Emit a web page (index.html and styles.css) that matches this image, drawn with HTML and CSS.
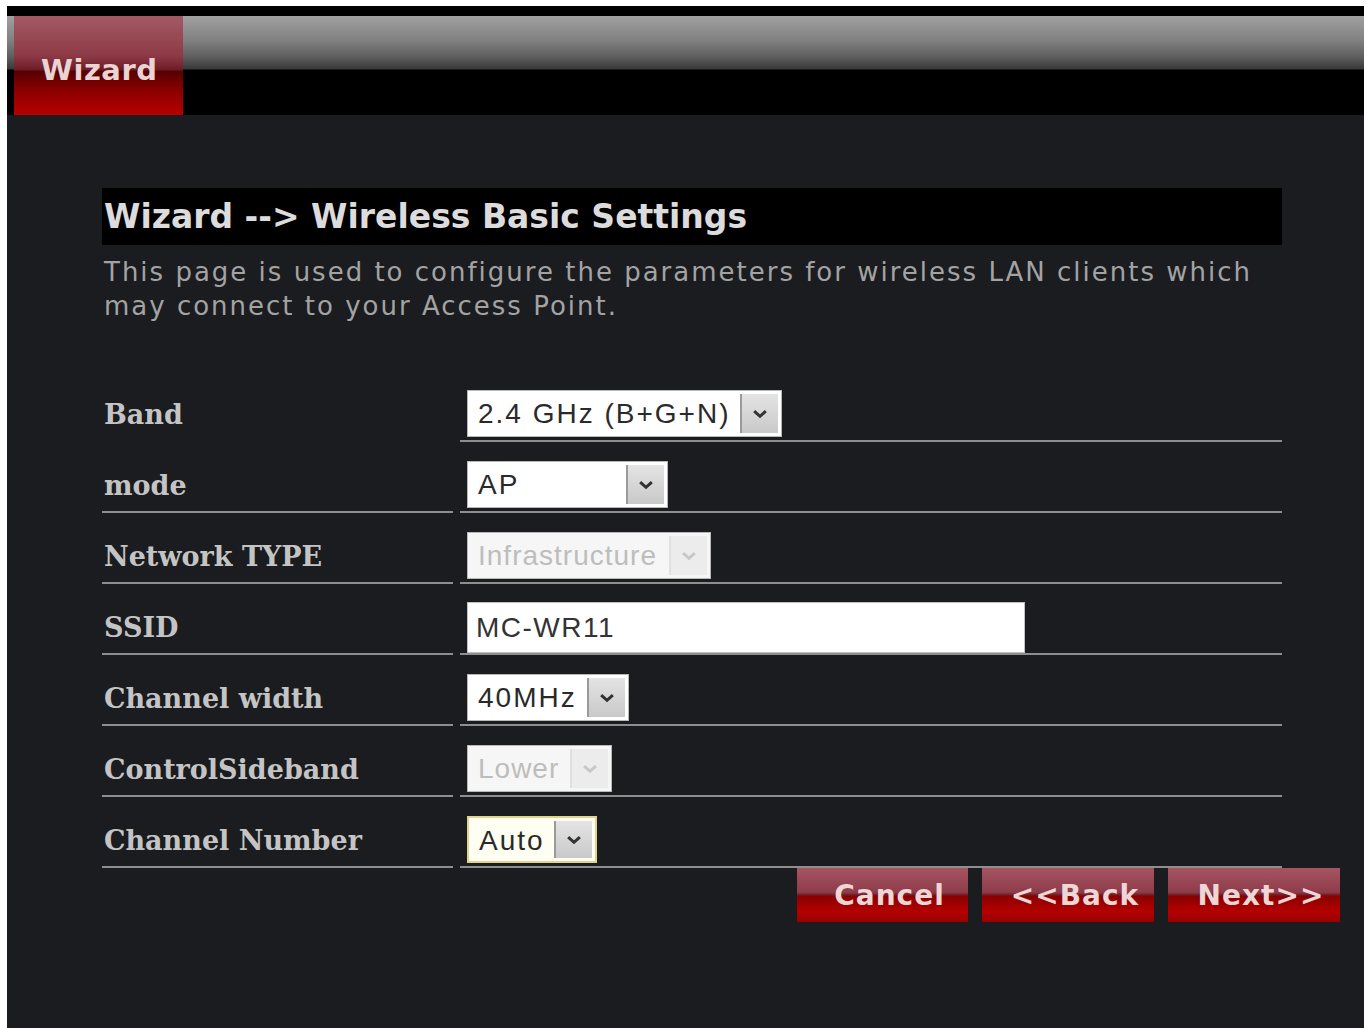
FILE: index.html
```html
<!DOCTYPE html>
<html lang="en">
<head>
    <meta charset="UTF-8">
    <meta name="viewport" content="width=device-width, initial-scale=1.0">
    <title>Wizard - Wireless Basic Settings</title>
    <link rel="stylesheet" href="styles.css">
</head>
<body>

    <div class="frame">

        <!-- barre du haut avec l'onglet -->
        <header class="topbar">
            <div class="tab">Wizard</div>
        </header>

        <main class="content">
            <h2 class="page-title">Wizard --&gt; Wireless Basic Settings</h2>
            <p class="page-desc">This page is used to configure the parameters for wireless LAN clients which may connect to your Access Point.</p>

            <div class="form-grid">
                <div class="label first">Band</div>
                <div class="field">
                    <div class="select w-band"><span class="value">2.4 GHz (B+G+N)</span><span class="arrow"><svg viewBox="0 0 12 8"><path d="M1 1.5 L6 6 L11 1.5" /></svg></span></div>
                </div>

                <div class="label">mode</div>
                <div class="field">
                    <div class="select w-mode"><span class="value">AP</span><span class="arrow"><svg viewBox="0 0 12 8"><path d="M1 1.5 L6 6 L11 1.5" /></svg></span></div>
                </div>

                <div class="label">Network TYPE</div>
                <div class="field">
                    <div class="select w-net disabled"><span class="value">Infrastructure</span><span class="arrow"><svg viewBox="0 0 12 8"><path d="M1 1.5 L6 6 L11 1.5" /></svg></span></div>
                </div>

                <div class="label">SSID</div>
                <div class="field">
                    <div class="text-input">MC-WR11</div>
                </div>

                <div class="label">Channel width</div>
                <div class="field">
                    <div class="select w-width"><span class="value">40MHz</span><span class="arrow"><svg viewBox="0 0 12 8"><path d="M1 1.5 L6 6 L11 1.5" /></svg></span></div>
                </div>

                <div class="label">ControlSideband</div>
                <div class="field">
                    <div class="select w-side disabled"><span class="value">Lower</span><span class="arrow"><svg viewBox="0 0 12 8"><path d="M1 1.5 L6 6 L11 1.5" /></svg></span></div>
                </div>

                <div class="label">Channel Number</div>
                <div class="field">
                    <div class="select w-chan focused"><span class="value">Auto</span><span class="arrow"><svg viewBox="0 0 12 8"><path d="M1 1.5 L6 6 L11 1.5" /></svg></span></div>
                </div>
            </div>

            <div class="button-row">
                <button class="wiz-btn btn-cancel">Cancel</button>
                <button class="wiz-btn btn-back">&lt;&lt;Back</button>
                <button class="wiz-btn btn-next">Next&gt;&gt;</button>
            </div>
        </main>

    </div>

</body>
</html>
```

FILE: styles.css
```css
body {
    margin: 0;
    padding: 0;
    background-color: #fff;
    font-family: 'DejaVu Sans', sans-serif;
    overflow: hidden;
}

.frame {
    margin: 6px 4px 0 7px;
    height: 1022px;
    background-color: #1a1c1f;
    border-top: 10px solid #000;
    box-sizing: border-box;
}

/* barre grise / noire */
.topbar {
    height: 99px;
    background: linear-gradient(#a0a0a0 0%, #808080 25%, #5c5c5c 42%, #3a3a3a 53%, #000 55%, #000 100%);
    padding-left: 7px;
}

.tab {
    width: 169px;
    height: 99px;
    box-sizing: border-box;
    padding: 37px 0 0 27px;
    background: linear-gradient(#a35a64 0%, #8d3a46 40%, #6e1d27 54%, #560000 56%, #8a0000 75%, #b80000 100%);
    color: #ead3d3;
    font-family: 'DejaVu Sans', sans-serif;
    font-weight: bold;
    font-size: 29px;
    letter-spacing: 0.5px;
}

.content {
    padding: 73px 0 0 95px;
    width: 1180px;
}

.page-title {
    margin: 0;
    height: 57px;
    background-color: #000;
    color: #dcdcdc;
    font-family: 'DejaVu Sans', sans-serif;
    font-size: 33px;
    font-weight: bold;
    line-height: 57px;
    padding-left: 2px;
}

.page-desc {
    margin: 10px 0 0 2px;
    max-width: 1160px;
    color: #a3a3a3;
    font-size: 26px;
    letter-spacing: 2px;
    line-height: 34px;
}

.form-grid {
    display: grid;
    grid-template-columns: 351px 822px;
    column-gap: 7px;
    margin-top: 48px;
}

.label, .field {
    height: 55px;
    border-bottom: 2px solid #8e8e8e;
    display: flex;
    align-items: center;
    padding-top: 14px;
}

.label {
    padding-left: 2px;
    padding-top: 17px;
    height: 52px;
    color: #c4c4c4;
    font-family: 'DejaVu Serif', serif;
    font-weight: bold;
    font-size: 27px;
}

.label.first {
    border-bottom-color: transparent;
}

.field {
    padding-left: 7px;
    padding-top: 16px;
    height: 53px;
}

.select {
    display: flex;
    height: 47px;
    box-sizing: border-box;
    background-color: #fff;
    border: 1px solid #b8b8b8;
    font-family: 'Liberation Sans', Arial, sans-serif;
    font-size: 28px;
    letter-spacing: 2px;
    color: #2a2a2a;
}

.select .value {
    flex: 1;
    padding: 0 0 0 10px;
    line-height: 45px;
    white-space: nowrap;
    overflow: hidden;
}

.select .arrow {
    width: 36px;
    margin: 3px 3px 3px 0;
    background: linear-gradient(#e4e4e4, #c9c9c9);
    border-left: 2px solid #9a9a9a;
    display: flex;
    align-items: center;
    justify-content: center;
}

.select .arrow svg {
    width: 14px;
    height: 10px;
    fill: none;
    stroke: #333;
    stroke-width: 2.6;
}

.select.disabled {
    color: #bdbdbd;
    background-color: #f6f6f6;
    letter-spacing: 1px;
}

.select.disabled .arrow {
    background: #ececec;
    border-left-color: #e0e0e0;
}

.select.disabled .arrow svg {
    stroke: #c8c8c8;
}

.select.focused {
    border: 2px solid #e2d28c;
    background-color: #fffef2;
}

.w-band { width: 315px; }
.w-mode { width: 201px; }
.w-net { width: 244px; }
.w-width { width: 162px; }
.w-side { width: 145px; }
.w-chan { width: 130px; }

.text-input {
    width: 558px;
    height: 51px;
    box-sizing: border-box;
    background-color: #fff;
    border: 1px solid #c0c0c0;
    padding-left: 8px;
    line-height: 49px;
    font-family: 'Liberation Sans', Arial, sans-serif;
    font-size: 28px;
    letter-spacing: 1.5px;
    color: #333;
    margin-top: 2px;
}

.button-row {
    display: flex;
    justify-content: flex-end;
    gap: 14px;
    margin-right: -58px;
}

.wiz-btn {
    width: 172px;
    height: 54px;
    border: none;
    padding: 0 0 0 14px;
    background: linear-gradient(#a65462 0%, #8e3c4a 45%, #6f1e28 50%, #8a0000 52%, #b30000 80%, #9a0000 100%);
    color: #efd6d6;
    font-family: 'DejaVu Sans', sans-serif;
    font-weight: bold;
    font-size: 28px;
    letter-spacing: 1px;
    cursor: pointer;
}

.btn-cancel { width: 171px; }
```
